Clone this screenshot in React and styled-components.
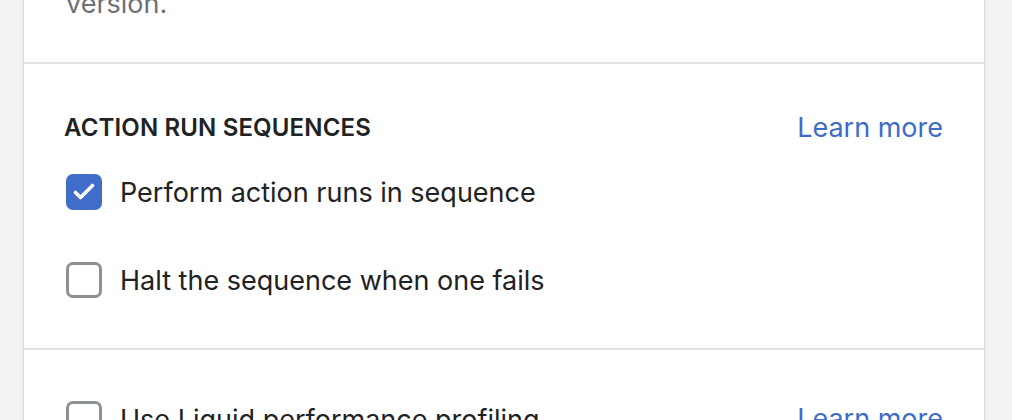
import React from "react";
import styled, { createGlobalStyle } from "styled-components";

const Global = createGlobalStyle`
  html, body { margin: 0; padding: 0; background: #f3f3f3; overflow: hidden; }
  body { font-family: Inter, "Noto Sans", "Liberation Sans", sans-serif; -webkit-font-smoothing: antialiased; }
`;

const Page = styled.div`
  width: 1012px;
  height: 420px;
  overflow: hidden;
  padding-left: 24px;
  box-sizing: border-box;
`;

const Card = styled.div`
  width: 960px;
  margin-top: -14px;
  background: #fff;
  box-shadow: 0 0 0 1px rgba(0, 0, 0, 0.05), 0 0 4px rgba(0, 0, 0, 0.1);
`;

const Section = styled.section`
  padding: ${(p) => p.$pad || "40px 41px 40px 42px"};
  border-top: ${(p) => (p.$first ? "none" : "2px solid #e3e3e3")};
`;

const Muted = styled.p`
  margin: 0;
  font-size: 27px;
  line-height: 36px;
  color: #6d7175;
`;

const Header = styled.div`
  display: flex;
  justify-content: space-between;
  align-items: center;
`;

const Heading = styled.h2`
  margin: 0 0 0 -2px;
  font-size: 24px;
  line-height: 32px;
  font-weight: 600;
  letter-spacing: 0.15px;
  color: #202223;
`;

const Link = styled.a`
  font-size: 27px;
  line-height: 32px;
  color: #3d6cc8;
  text-decoration: none;
`;

const List = styled.div`
  display: flex;
  flex-direction: column;
  gap: 52px;
  margin-top: ${(p) => p.$mt || "0"};
`;

const Row = styled.label`
  display: flex;
  align-items: center;
  gap: 18px;
  height: 36px;
  font-size: 27px;
  color: #202223;
`;

const Box = styled.span`
  box-sizing: border-box;
  width: 36px;
  height: 36px;
  flex: none;
  border-radius: 7px;
  display: flex;
  align-items: center;
  justify-content: center;
  background: ${(p) => (p.$checked ? "#3f6dc9" : "#fff")};
  border: ${(p) => (p.$checked ? "none" : "3px solid #8c9196")};
`;

const Spacer = styled.div`
  flex: 1;
`;

function Checkbox({ checked, children, link }) {
  return (
    <Row>
      <Box $checked={checked}>
        {checked && (
          <svg width="36" height="36" viewBox="0 0 36 36" fill="none">
            <path d="M9.5 18.5l5 5L26.5 11.5" stroke="#fff" strokeWidth="3.6" strokeLinecap="round" strokeLinejoin="round" />
          </svg>
        )}
      </Box>
      <span>{children}</span>
      {link && (
        <>
          <Spacer />
          <Link href="#">{link}</Link>
        </>
      )}
    </Row>
  );
}

export default function App() {
  return (
    <>
      <Global />
      <Page>
        <Card>
          <Section $first $pad="0 41px 40px 42px">
            <Muted>version.</Muted>
          </Section>
          <Section $pad="48px 41px 50px 42px">
            <Header>
              <Heading>ACTION RUN SEQUENCES</Heading>
              <Link href="#">Learn more</Link>
            </Header>
            <List $mt="30px">
              <Checkbox checked>Perform action runs in sequence</Checkbox>
              <Checkbox>Halt the sequence when one fails</Checkbox>
            </List>
          </Section>
          <Section $pad="51px 41px 40px 42px">
            <List>
              <Checkbox link="Learn more">Use Liquid performance profiling</Checkbox>
            </List>
          </Section>
        </Card>
      </Page>
    </>
  );
}
